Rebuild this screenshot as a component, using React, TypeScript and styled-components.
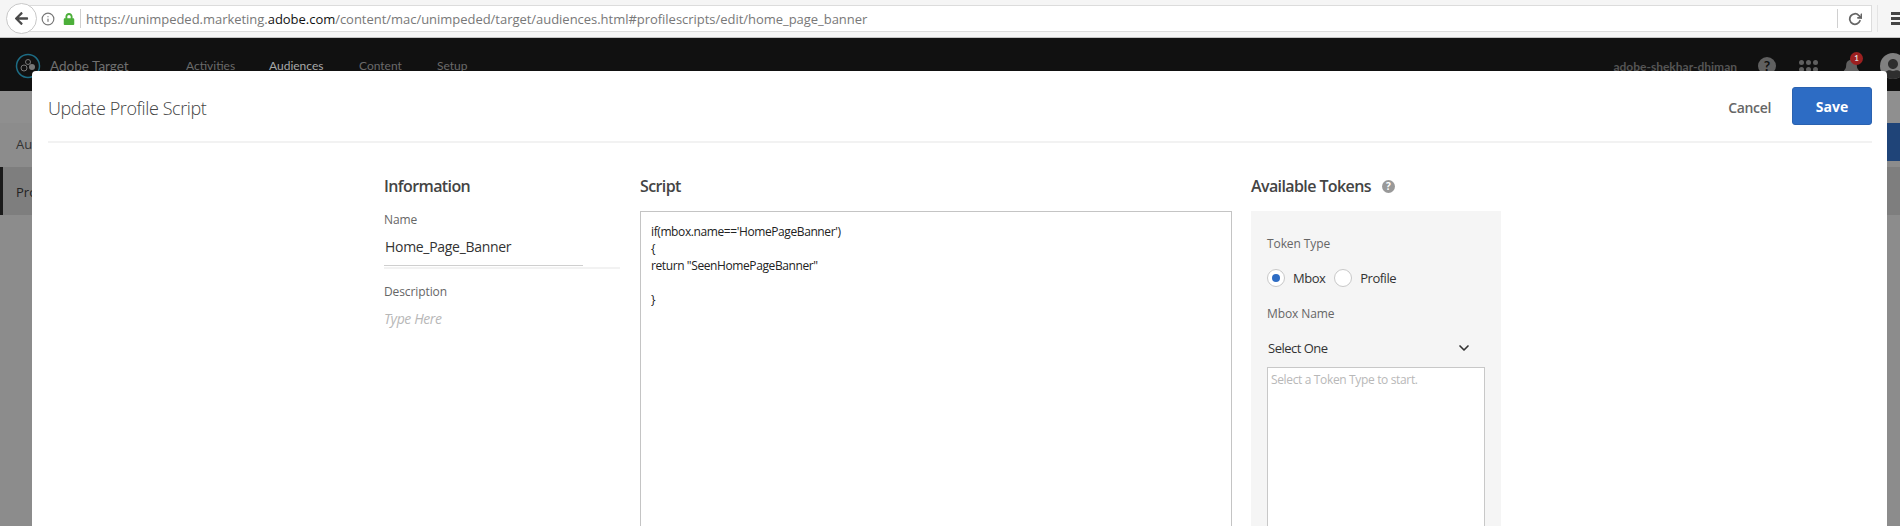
import React from "react";
import styled, { createGlobalStyle } from "styled-components";
import { FaArrowLeft, FaBell, FaLock, FaUser } from "react-icons/fa";
import { FiChevronDown, FiInfo, FiRotateCw } from "react-icons/fi";

const sans = `"Open Sans", "Noto Sans", "Liberation Sans", sans-serif`;

const GlobalStyle = createGlobalStyle`
  html, body {
    margin: 0;
    height: 526px;
    overflow: hidden;
    background: #8c8c8c;
    font-family: ${sans};
  }
`;

const Page = styled.div`
  position: relative;
  width: 1900px;
  height: 526px;
  overflow: hidden;
`;

const BrowserBar = styled.div`
  height: 37px;
  display: flex;
  align-items: center;
  background: #f5f5f5;
  border-bottom: 1px solid #c4c4c4;
  padding-left: 6px;
`;

const BackButton = styled.div`
  width: 31px;
  height: 31px;
  box-sizing: border-box;
  border: 1px solid #c8c8c8;
  border-radius: 50%;
  background: #fff;
  color: #4a4a4a;
  display: flex;
  align-items: center;
  justify-content: center;
  font-size: 15px;
  flex: none;
  z-index: 1;
`;

const UrlBar = styled.div`
  width: 1852px;
  height: 27px;
  margin-left: -17px;
  padding-left: 20px;
  box-sizing: border-box;
  display: flex;
  align-items: center;
  background: #fff;
  border: 1px solid #dcdcdc;
  flex: none;
`;

const UrlIcons = styled.div`
  display: flex;
  align-items: center;
  gap: 8px;
  height: 19px;
  padding-right: 5px;
  margin-right: 5px;
  border-right: 1px solid #d0d0d0;
  font-size: 12px;
`;

const Url = styled.div`
  flex: 1;
  font-size: 13px;
  letter-spacing: -0.03px;
  color: #787878;
  white-space: nowrap;
  b {
    font-weight: 400;
    color: #111;
  }
`;

const Reload = styled.div`
  width: 33px;
  height: 19px;
  border-left: 1px solid #d0d0d0;
  color: #666;
  display: flex;
  align-items: center;
  justify-content: center;
  font-size: 14px;
`;

const Hamburger = styled.div`
  margin-left: 5px;
  padding-left: 13px;
  border-left: 1px solid #e4e4e4;
  height: 27px;
  display: flex;
  flex-direction: column;
  justify-content: center;
  gap: 2px;
  flex: none;
  i {
    display: block;
    width: 14px;
    height: 3px;
    background: #444;
  }
`;

const Nav = styled.div`
  height: 53px;
  background: #111;
  display: flex;
  align-items: flex-start;
  padding: 16px 0 0 15px;
  box-sizing: border-box;
  color: #6f6f6f;
  font-family: Lato, ${sans};
  font-size: 12px;
`;

const Brand = styled.div`
  display: flex;
  align-items: center;
  gap: 9px;
  width: 171px;
  height: 24px;
  font-size: 13.5px;
`;

const NavLink = styled.div<{ $active?: boolean; $width: number }>`
  width: ${(p) => p.$width}px;
  line-height: 24px;
  color: ${(p) => (p.$active ? "#a8a8a8" : "#6a6a6a")};
`;

const NavRight = styled.div`
  margin-left: auto;
  margin-right: -6px;
  display: flex;
  align-items: center;
  height: 24px;
  color: #555;
`;

const UserName = styled.span`
  font-weight: 700;
  font-size: 12px;
  margin-right: 21px;
`;

const NavIcon = styled.div<{ $mr: number }>`
  position: relative;
  margin-right: ${(p) => p.$mr}px;
  display: flex;
`;

const HelpDisc = styled.div`
  width: 18px;
  height: 18px;
  border-radius: 50%;
  background: #606060;
  color: #111;
  font-size: 14px;
  font-weight: 700;
  line-height: 18px;
  text-align: center;
`;

const Dots = styled.div`
  display: grid;
  grid-template-columns: repeat(3, 5px);
  gap: 2px;
  i {
    width: 5px;
    height: 5px;
    border-radius: 50%;
    background: #606060;
  }
`;

const Badge = styled.div`
  position: absolute;
  top: -6px;
  right: -3px;
  width: 13px;
  height: 13px;
  border-radius: 50%;
  background: #9c2020;
  color: #ddd;
  font-size: 8px;
  line-height: 13px;
  text-align: center;
  font-weight: 700;
`;

const Avatar = styled.div`
  width: 26px;
  height: 26px;
  border-radius: 50%;
  background: #808080;
  color: #2e2e2e;
  display: flex;
  align-items: flex-end;
  justify-content: center;
  overflow: hidden;
  font-size: 20px;
  flex: none;
`;

const SubBar = styled.div`
  height: 32px;
  display: flex;
  justify-content: flex-end;
  background: #8f8f8f;
`;

const BlueStrip = styled.div`
  width: 13px;
  height: 38px;
  margin-top: 32px;
  background: #1f4478;
`;

const SideLabel = styled.div`
  padding: 12px 0 0 16px;
  height: 44px;
  box-sizing: border-box;
  font-size: 13px;
  color: #333;
`;

const SideRow = styled.div`
  height: 48px;
  width: 100%;
  box-sizing: border-box;
  background: #7e7e7e;
  border-left: 3px solid #1a1a1a;
  padding-left: 13px;
  line-height: 50px;
  font-size: 13px;
  color: #222;
`;

const Modal = styled.div`
  position: absolute;
  left: 32px;
  top: 71px;
  width: 1855px;
  height: 455px;
  box-sizing: border-box;
  background: #fff;
  border-radius: 4px 4px 0 0;
  padding: 0 15px 0 16px;
`;

const ModalHeader = styled.div`
  height: 72px;
  display: flex;
  align-items: center;
  border-bottom: 2px solid #f2f2f2;
  box-sizing: border-box;
`;

const ModalTitle = styled.div`
  font-size: 18px;
  font-weight: 300;
  letter-spacing: -0.4px;
  color: #444;
  margin-right: auto;
  padding-top: 4px;
`;

const CancelButton = styled.div`
  font-size: 14px;
  font-weight: 600;
  letter-spacing: -0.35px;
  color: #666;
  margin-right: 21px;
  padding-top: 2px;
`;

const SaveButton = styled.div`
  width: 80px;
  height: 38px;
  border-radius: 3px;
  background: #2d6cc4;
  border: 1px solid #2a62b0;
  box-sizing: border-box;
  color: #fff;
  font-size: 14px;
  font-weight: 700;
  display: flex;
  align-items: center;
  justify-content: center;
`;

const Columns = styled.div`
  display: grid;
  grid-template-columns: 256px 611px 250px;
  margin-left: 336px;
  padding-top: 31px;
`;

const Heading = styled.div`
  display: flex;
  align-items: center;
  gap: 11px;
  height: 24px;
  font-size: 16px;
  font-weight: 600;
  letter-spacing: -0.6px;
  color: #444;
  margin-bottom: 13px;
`;

const InfoColumn = styled.div`
  width: 236px;
`;

const FieldLabel = styled.div`
  font-size: 12px;
  line-height: 18px;
  color: #666;
  letter-spacing: -0.1px;
`;

const NameValue = styled.div`
  font-size: 14px;
  letter-spacing: -0.3px;
  line-height: 20px;
  color: #333;
  margin-top: 8px;
  padding: 0 0 8px 1px;
  border-bottom: 1px solid #cfcfcf;
  width: 198px;
`;

const NameRule = styled.div`
  height: 2px;
  margin-top: 1px;
  margin-bottom: 14px;
  background: #f2f2f2;
`;

const Placeholder = styled.div`
  font-size: 14px;
  font-style: italic;
  letter-spacing: -0.4px;
  line-height: 20px;
  color: #b8b8b8;
  margin-top: 8px;
`;

const ScriptBox = styled.div`
  width: 592px;
  height: 400px;
  box-sizing: border-box;
  border: 1px solid #c4c4c4;
  padding: 11px 10px;
  font-size: 12px;
  letter-spacing: -0.4px;
  line-height: 17px;
  color: #222;
  white-space: pre;
`;

const TokenHelp = styled.span`
  width: 13px;
  height: 13px;
  border-radius: 50%;
  background: #999;
  color: #fff;
  font-size: 10px;
  font-weight: 700;
  letter-spacing: 0;
  line-height: 13px;
  text-align: center;
`;

const TokenPanel = styled.div`
  height: 400px;
  box-sizing: border-box;
  background: #f5f5f5;
  padding: 25px 16px;
`;

const PanelLabel = styled.div`
  font-size: 12px;
  letter-spacing: -0.1px;
  line-height: 16px;
  color: #666;
`;

const RadioRow = styled.div`
  display: flex;
  align-items: center;
  height: 20px;
  margin: 16px 0 18px;
  font-size: 13px;
  letter-spacing: -0.5px;
  color: #333;
`;

const Radio = styled.span<{ $checked?: boolean }>`
  width: 18px;
  height: 18px;
  box-sizing: border-box;
  border-radius: 50%;
  border: 1px solid #c8c8c8;
  background: #fff;
  margin-right: 8px;
  display: flex;
  align-items: center;
  justify-content: center;
  &::after {
    content: "";
    display: ${(p) => (p.$checked ? "block" : "none")};
    width: 8px;
    height: 8px;
    border-radius: 50%;
    background: #2d6cc4;
  }
`;

const RadioText = styled.span`
  margin-right: 9px;
`;

const SelectRow = styled.div`
  display: flex;
  align-items: center;
  justify-content: space-between;
  height: 20px;
  margin-top: 16px;
  padding: 0 13px 0 1px;
  font-size: 13px;
  letter-spacing: -0.5px;
  color: #333;
`;

const TokenList = styled.div`
  height: 200px;
  margin-top: 9px;
  box-sizing: border-box;
  border: 1px solid #c8c8c8;
  background: #fff;
  padding: 4px 3px;
  font-size: 12px;
  letter-spacing: -0.35px;
  line-height: 16px;
  color: #b8b8b8;
`;

const Logo = () => (
  <svg width="26" height="26" viewBox="0 0 26 26" fill="none" style={{ flex: "none" }}>
    <circle cx="13" cy="13" r="11.5" stroke="#1d6c84" strokeWidth="1.5" />
    <circle cx="9" cy="15" r="3" stroke="#777" />
    <circle cx="13" cy="9" r="2.5" stroke="#777" />
    <circle cx="17" cy="14" r="3" fill="#777" />
    <path d="M11 12l-1 1M15 10.5l1 1" stroke="#777" />
  </svg>
);

export default function App() {
  return (
    <Page>
      <GlobalStyle />
      <BrowserBar>
        <BackButton>
          <FaArrowLeft />
        </BackButton>
        <UrlBar>
          <UrlIcons>
            <FiInfo color="#777" size={14} />
            <FaLock color="#4caf3a" size={12} />
          </UrlIcons>
          <Url>
            https://unimpeded.marketing.<b>adobe.com</b>
            /content/mac/unimpeded/target/audiences.html#profilescripts/edit/home_page_banner
          </Url>
          <Reload>
            <FiRotateCw strokeWidth={3} />
          </Reload>
        </UrlBar>
        <Hamburger>
          <i />
          <i />
          <i />
        </Hamburger>
      </BrowserBar>
      <Nav>
        <Brand>
          <Logo />
          Adobe Target
        </Brand>
        <NavLink $width={83}>Activities</NavLink>
        <NavLink $width={90} $active>
          Audiences
        </NavLink>
        <NavLink $width={78}>Content</NavLink>
        <NavLink $width={60}>Setup</NavLink>
        <NavRight>
          <UserName>adobe-shekhar-dhiman</UserName>
          <NavIcon $mr={23}>
            <HelpDisc>?</HelpDisc>
          </NavIcon>
          <NavIcon $mr={25}>
            <Dots>
              {Array.from({ length: 6 }).map((_, i) => (
                <i key={i} />
              ))}
            </Dots>
          </NavIcon>
          <NavIcon $mr={20}>
            <FaBell size={17} color="#606060" />
            <Badge>1</Badge>
          </NavIcon>
          <Avatar>
            <FaUser />
          </Avatar>
        </NavRight>
      </Nav>
      <SubBar>
        <BlueStrip />
      </SubBar>
      <SideLabel>Au</SideLabel>
      <SideRow>Pro</SideRow>
      <Modal>
        <ModalHeader>
          <ModalTitle>Update Profile Script</ModalTitle>
          <CancelButton>Cancel</CancelButton>
          <SaveButton>Save</SaveButton>
        </ModalHeader>
        <Columns>
          <InfoColumn>
            <Heading>Information</Heading>
            <FieldLabel>Name</FieldLabel>
            <NameValue>Home_Page_Banner</NameValue>
            <NameRule />
            <FieldLabel>Description</FieldLabel>
            <Placeholder>Type Here</Placeholder>
          </InfoColumn>
          <div>
            <Heading>Script</Heading>
            <ScriptBox>{`if(mbox.name=='HomePageBanner')
{
return "SeenHomePageBanner"

}`}</ScriptBox>
          </div>
          <div>
            <Heading>
              Available Tokens <TokenHelp>?</TokenHelp>
            </Heading>
            <TokenPanel>
              <PanelLabel>Token Type</PanelLabel>
              <RadioRow>
                <Radio $checked />
                <RadioText>Mbox</RadioText>
                <Radio />
                <RadioText>Profile</RadioText>
              </RadioRow>
              <PanelLabel>Mbox Name</PanelLabel>
              <SelectRow>
                Select One
                <FiChevronDown size={16} color="#333" strokeWidth={2.5} />
              </SelectRow>
              <TokenList>Select a Token Type to start.</TokenList>
            </TokenPanel>
          </div>
        </Columns>
      </Modal>
    </Page>
  );
}
